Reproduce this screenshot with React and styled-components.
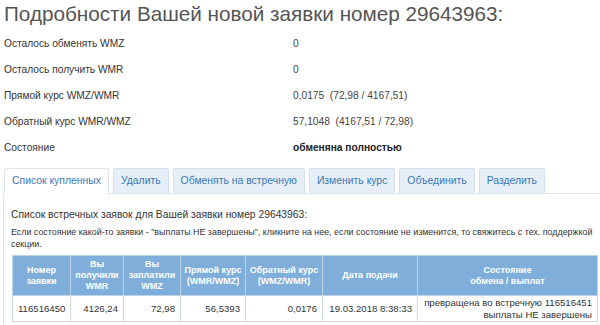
import React from 'react';
import styled, { createGlobalStyle } from 'styled-components';

const info = [
  { label: 'Осталось обменять WMZ', value: '0' },
  { label: 'Осталось получить WMR', value: '0' },
  { label: 'Прямой курс WMZ/WMR', value: '0,0175  (72,98 / 4167,51)' },
  { label: 'Обратный курс WMR/WMZ', value: '57,1048  (4167,51 / 72,98)' },
  { label: 'Состояние', value: 'обменяна полностью', bold: true },
];

const tabs = ['Список купленных', 'Удалить', 'Обменять на встречную', 'Изменить курс', 'Объединить', 'Разделить'];

const columns = [
  { title: ['Номер', 'заявки'], width: 58 },
  { title: ['Вы', 'получили', 'WMR'], width: 53 },
  { title: ['Вы', 'заплатили', 'WMZ'], width: 57 },
  { title: ['Прямой курс', '(WMR/WMZ)'], width: 65 },
  { title: ['Обратный курс', '(WMZ/WMR)'], width: 77 },
  { title: ['Дата подачи'], width: 95 },
  { title: ['Состояние', 'обмена / выплат'], width: 180 },
];

const rows = [
  ['116516450', '4126,24', '72,98', '56,5393', '0,0176', '19.03.2018 8:38:33', ['превращена во встречную 116516451', 'выплаты НЕ завершены']],
];

const Global = createGlobalStyle`
  html, body {
    margin: 0;
    overflow: hidden;
    background: #fff;
  }
  body {
    font-family: "Liberation Sans", Arial, sans-serif;
    color: #333;
  }
`;

function App() {
  return (
    <Page>
      <Global />
      <Titulo>Подробности Вашей новой заявки номер 29643963:</Titulo>
      <Info>
        {info.map((r, i) => (
          <InfoRow key={i}>
            <Label>{r.label}</Label>
            <Value $bold={r.bold}>{r.value}</Value>
          </InfoRow>
        ))}
      </Info>

      <Tabs>
        {tabs.map((t, i) => (
          <Tab key={i} $active={i === 0}>{t}</Tab>
        ))}
      </Tabs>

      <Panel>
        <Subtitulo>Список встречных заявок для Вашей заявки номер 29643963:</Subtitulo>
        <Nota>
          Если состояние какой-то заявки - "выплаты НЕ завершены", кликните на нее, если состояние не изменится, то свяжитесь с тех. поддержкой секции.
        </Nota>
        <Tabla>
          <colgroup>
            {columns.map((c, i) => (
              <col key={i} style={{ width: c.width }} />
            ))}
          </colgroup>
          <thead>
            <tr>
              {columns.map((c, i) => (
                <Th key={i}>
                  {c.title.map((l, j) => (
                    <div key={j}>{l}</div>
                  ))}
                </Th>
              ))}
            </tr>
          </thead>
          <tbody>
            {rows.map((r, i) => (
              <tr key={i}>
                {r.map((cell, j) => (
                  <Td key={j} $center={j === 0}>
                    {Array.isArray(cell) ? cell.map((l, k) => <div key={k}>{l}</div>) : cell}
                  </Td>
                ))}
              </tr>
            ))}
          </tbody>
        </Tabla>
      </Panel>
    </Page>
  );
}

const Page = styled.div`
  width: 610px;
  padding: 0 0 0 4px;
  box-sizing: border-box;
`;

const Titulo = styled.h1`
  margin: 0;
  padding-top: 2px;
  height: 28px;
  font-size: 20.7px;
  font-weight: normal;
  color: #555;
  line-height: 24px;
  white-space: nowrap;
`;

const Info = styled.div`
  display: flex;
  flex-direction: column;
`;

const InfoRow = styled.div`
  display: flex;
  height: 26px;
  align-items: center;
  font-size: 10.2px;
`;

const Label = styled.div`
  width: 289px;
  color: #333;
`;

const Value = styled.div`
  white-space: pre;
  color: ${p => (p.$bold ? '#222' : '#444')};
  font-weight: ${p => (p.$bold ? 'bold' : 'normal')};
`;

const Tabs = styled.div`
  display: flex;
  gap: 4px;
  margin-top: 8px;
  border-bottom: 1px solid #dde3ea;
`;

const Tab = styled.div`
  line-height: 24px;
  padding: 0 7px;
  font-size: 10.4px;
  color: #3a78b5;
  background: ${p => (p.$active ? '#fff' : '#e6eff8')};
  border: 1px solid ${p => (p.$active ? '#dde3ea' : '#d3e1ef')};
  border-bottom: none;
  margin-bottom: ${p => (p.$active ? '-1px' : '0')};
  height: ${p => (p.$active ? '25px' : '24px')};
  border-radius: 3px 3px 0 0;
  white-space: nowrap;
`;

const Panel = styled.div`
  border-left: 1px solid #dde3ea;
  margin-left: -1px;
  padding: 14px 0 8px 7px;
`;

const Subtitulo = styled.div`
  font-size: 10.3px;
  color: #333;
  line-height: 14px;
  margin-bottom: 4px;
`;

const Nota = styled.div`
  font-size: 8.9px;
  line-height: 12px;
  color: #333;
  width: 584px;
  margin-bottom: 5px;
`;

const Tabla = styled.table`
  border-collapse: collapse;
  table-layout: fixed;
  width: 585px;
  margin-left: 1px;
`;

const Th = styled.th`
  box-sizing: border-box;
  background: #7eaed9;
  color: #fff;
  font-size: 9px;
  font-weight: bold;
  line-height: 11px;
  height: 40px;
  padding: 0 2px;
  border: 1px solid #bcd3ea;
  text-align: center;
  vertical-align: middle;
  overflow: hidden;
`;

const Td = styled.td`
  box-sizing: border-box;
  font-size: 9.6px;
  line-height: 12px;
  height: 26px;
  padding: 0 5px;
  border: 1px solid #cfd6dd;
  text-align: ${p => (p.$center ? 'center' : 'right')};
  color: #333;
  white-space: nowrap;
`;

export default App;
